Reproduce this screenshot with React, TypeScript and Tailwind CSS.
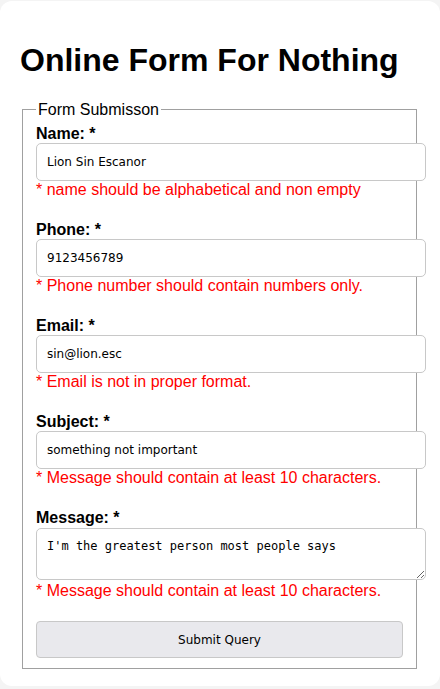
const fields = [
  {
    label: "Name: *",
    value: "Lion Sin Escanor",
    error: "* name should be alphabetical and non empty",
  },
  {
    label: "Phone: *",
    value: "9123456789",
    error: "* Phone number should contain numbers only.",
  },
  {
    label: "Email: *",
    value: "sin@lion.esc",
    error: "* Email is not in proper format.",
  },
  {
    label: "Subject: *",
    value: "something not important",
    error: "* Message should contain at least 10 characters.",
  },
];

const App = () => {
  return (
    <div className="min-h-[689px] bg-[#f4f4f4] pt-px font-['Liberation_Sans',Arial,sans-serif] text-black">
      <div className="rounded-xl bg-white pl-5 pr-[21px] pt-5 pb-[17px]">
        <h1 className="my-[21.44px] text-[32px] font-bold leading-[36.8px]">
          Online Form For Nothing
        </h1>
        <form onSubmit={(e) => e.preventDefault()}>
          <fieldset className="mx-[2px] border border-[#a0a0a0] px-[13px] pt-[5.6px] pb-[10px]">
            <legend className="px-[2px] text-[16px] leading-[18.4px]">Form Submisson</legend>

            {fields.map((f) => (
              <div key={f.label} className="mb-[21.2px] flex flex-col items-start">
                <label className="text-[16px] font-bold leading-[18.4px]">{f.label}</label>
                <input
                  type="text"
                  defaultValue={f.value}
                  className="box-border h-[38px] w-[calc(100%+23px)] rounded-[5px] border border-[#c8c8c8] bg-white px-[10px] font-['DejaVu_Sans',sans-serif] text-[12px] text-black outline-none"
                />
                <p className="text-[16px] leading-[18.4px] text-[#ff0000]">{f.error}</p>
              </div>
            ))}

            <div className="mb-[21px] flex flex-col items-start">
              <label className="text-[16px] font-bold leading-[18.4px]">Message: *</label>
              <textarea
                defaultValue="I'm the greatest person most people says"
                className="mt-px box-border h-[52px] w-[calc(100%+23px)] rounded-[5px] border border-[#c8c8c8] bg-white px-[10px] py-[10px] font-['DejaVu_Sans_Mono',monospace] text-[12px] leading-[15px] text-black outline-none"
              />
              <p className="mt-[2px] text-[16px] leading-[18.4px] text-[#ff0000]">
                * Message should contain at least 10 characters.
              </p>
            </div>

            <button
              type="submit"
              className="box-border h-[37px] w-full rounded-[4px] border border-[#c8c8c8] bg-[#e9e9ed] font-['DejaVu_Sans',sans-serif] text-[12px] text-black"
            >
              Submit Query
            </button>
          </fieldset>
        </form>
      </div>
    </div>
  );
};

export default App;
